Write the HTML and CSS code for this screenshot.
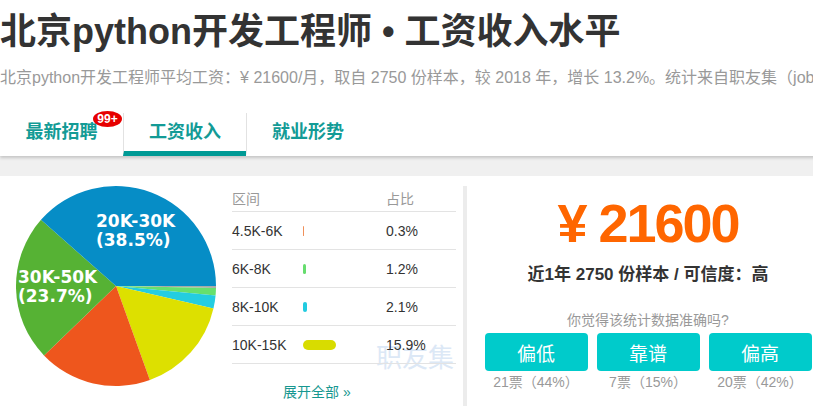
FILE: index.html
```html
<!DOCTYPE html>
<html lang="zh-CN">
<head>
    <meta charset="UTF-8" />
    <title>北京python开发工程师工资收入水平</title>
    <link rel="stylesheet" href="styles.css">
</head>
<body>
<div class="page">
    <div class="header">
        <h1>北京python开发工程师 • 工资收入水平</h1>
        <p class="summary">北京python开发工程师平均工资：¥ 21600/月，取自 2750 份样本，较 2018 年，增长 13.2%。统计来自职友集（jobui.com）</p>
        <nav class="tabs">
            <a href="#" class="tab">最新招聘<span class="badge">99+</span></a>
            <a href="#" class="tab active">工资收入</a>
            <a href="#" class="tab">就业形势</a>
        </nav>
    </div>

    <div class="content">
        <div class="dist">
            <svg class="pie" width="220" height="220" viewBox="0 0 220 220">
                <path d="M116 110 L216 110 A100 100 0 0 1 215.98 111.88 Z" fill="#a9a9a9"/>
                <path d="M116 110 L215.98 111.88 A100 100 0 0 1 215.56 119.41 Z" fill="#66e06e"/>
                <path d="M116 110 L215.56 119.41 A100 100 0 0 1 213.45 132.43 Z" fill="#24cde0"/>
                <path d="M116 110 L213.45 132.43 A100 100 0 0 1 149.87 204.09 Z" fill="#dde000"/>
                <path d="M116 110 L149.87 204.09 A100 100 0 0 1 44 179.4 Z" fill="#ee561d"/>
                <path d="M116 110 L44 179.4 A100 100 0 0 1 40.99 43.87 Z" fill="#56b234"/>
                <path d="M116 110 L40.99 43.87 A100 100 0 0 1 216 110 Z" fill="#068dc6"/>
                <g class="pie-label">
                    <text x="96" y="51">20K-30K</text>
                    <text x="96" y="70">(38.5%)</text>
                    <text x="18" y="107">30K-50K</text>
                    <text x="18" y="126">(23.7%)</text>
                </g>
            </svg>

            <div class="range-table">
                <div class="row head"><span>区间</span><span></span><span>占比</span></div>
                <div class="row"><span>4.5K-6K</span><span><i class="bar" style="width:1px;background:#f0905a"></i></span><span>0.3%</span></div>
                <div class="row"><span>6K-8K</span><span><i class="bar" style="width:3px;background:#66dd6e"></i></span><span>1.2%</span></div>
                <div class="row"><span>8K-10K</span><span><i class="bar" style="width:4px;background:#22cbe0"></i></span><span>2.1%</span></div>
                <div class="row"><span>10K-15K</span><span><i class="bar" style="width:33px;background:#d8dc00"></i></span><span>15.9%</span></div>
                <a href="#" class="more">展开全部 »</a>
            </div>

            <div class="watermark">职友集</div>
        </div>

        <div class="salary">
            <div class="amount">¥ 21600</div>
            <div class="meta">近1年 2750 份样本 / 可信度：高</div>
            <p class="ask">你觉得该统计数据准确吗?</p>
            <div class="votes">
                <div class="vote"><button>偏低</button><span>21票（44%）</span></div>
                <div class="vote"><button>靠谱</button><span>7票（15%）</span></div>
                <div class="vote"><button>偏高</button><span>20票（42%）</span></div>
            </div>
        </div>
    </div>
</div>
</body>
</html>
```

FILE: styles.css
```css
* { box-sizing: border-box; }
html { overflow: hidden; }
body {
    margin: 0;
    background: #f0f0f0;
    color: #333;
    font-family: "Liberation Sans", "Noto Sans CJK SC", sans-serif;
}
.page { width: 829px; }

.header {
    background: #fff;
    position: relative;
    z-index: 1;
    box-shadow: 0 2px 3px rgba(0, 0, 0, 0.18);
}
h1 {
    margin: 0;
    padding-top: 10px;
    font-size: 36px;
    line-height: 44px;
    font-weight: bold;
    color: #333;
    white-space: nowrap;
}
.summary {
    margin: 12px 0 0;
    font-size: 16px;
    line-height: 24px;
    color: #999;
    white-space: nowrap;
}

.tabs {
    display: flex;
    margin-top: 23px;
}
.tab {
    position: relative;
    width: 123px;
    height: 43px;
    line-height: 38px;
    text-align: center;
    font-size: 18px;
    font-weight: bold;
    color: #139b96;
    text-decoration: none;
    border-bottom: 5px solid transparent;
}
.tab + .tab { border-left: 1px solid #e2e2e2; }
.tab.active { border-bottom-color: #009a95; }
.badge {
    position: absolute;
    right: 1px;
    top: -2px;
    width: 29px;
    height: 16px;
    border-radius: 50%;
    background: #e60000;
    color: #fff;
    font-size: 12px;
    line-height: 16px;
    font-weight: bold;
}

.content {
    display: flex;
    margin-top: 20px;
    background: #fff;
    height: 240px;
}
.dist {
    position: relative;
    display: flex;
    width: 463px;
}
.pie {
    display: block;
    margin-right: 12px;
}
.pie-label text {
    font-family: "DejaVu Sans", sans-serif;
    font-weight: bold;
    font-size: 17px;
    fill: #fff;
}

.range-table {
    position: relative;
    z-index: 1;
    width: 224px;
    padding-top: 8px;
    font-size: 14px;
}
.row {
    display: grid;
    grid-template-columns: 71px 83px 1fr;
    align-items: center;
    height: 38px;
    border-bottom: 1px solid #e3e3e3;
    color: #333;
}
.row.head {
    height: 28px;
    color: #999;
}
.bar {
    display: block;
    height: 10px;
    border-radius: 5px;
}
.more {
    display: block;
    padding: 18px 0 0 51px;
    line-height: 20px;
    color: #179790;
    text-decoration: none;
}
.watermark {
    position: absolute;
    left: 376px;
    top: 167px;
    font-size: 26px;
    line-height: 30px;
    color: #dce8f6;
    z-index: 0;
}

.salary {
    width: 366px;
    margin-top: 10px;
    padding-top: 5px;
    border-left: 4px solid #ececec;
    text-align: center;
}
.amount {
    font-size: 54px;
    line-height: 64px;
    font-weight: bold;
    letter-spacing: -2px;
    color: #ff6600;
}
.meta {
    margin-top: 8px;
    font-size: 17px;
    line-height: 24px;
    font-weight: bold;
    color: #333;
}
.ask {
    margin: 23px 0 3px;
    font-size: 14px;
    line-height: 20px;
    color: #999;
}
.votes {
    display: grid;
    grid-template-columns: repeat(3, 103px);
    column-gap: 9px;
    justify-content: center;
}
.vote button {
    display: block;
    width: 100%;
    height: 38px;
    border: none;
    border-radius: 4px;
    background: #00cbcb;
    color: #fff;
    font-family: inherit;
    font-size: 19px;
    cursor: pointer;
}
.vote span {
    display: block;
    margin-top: 1px;
    font-size: 14px;
    line-height: 20px;
    color: #999;
}
```
